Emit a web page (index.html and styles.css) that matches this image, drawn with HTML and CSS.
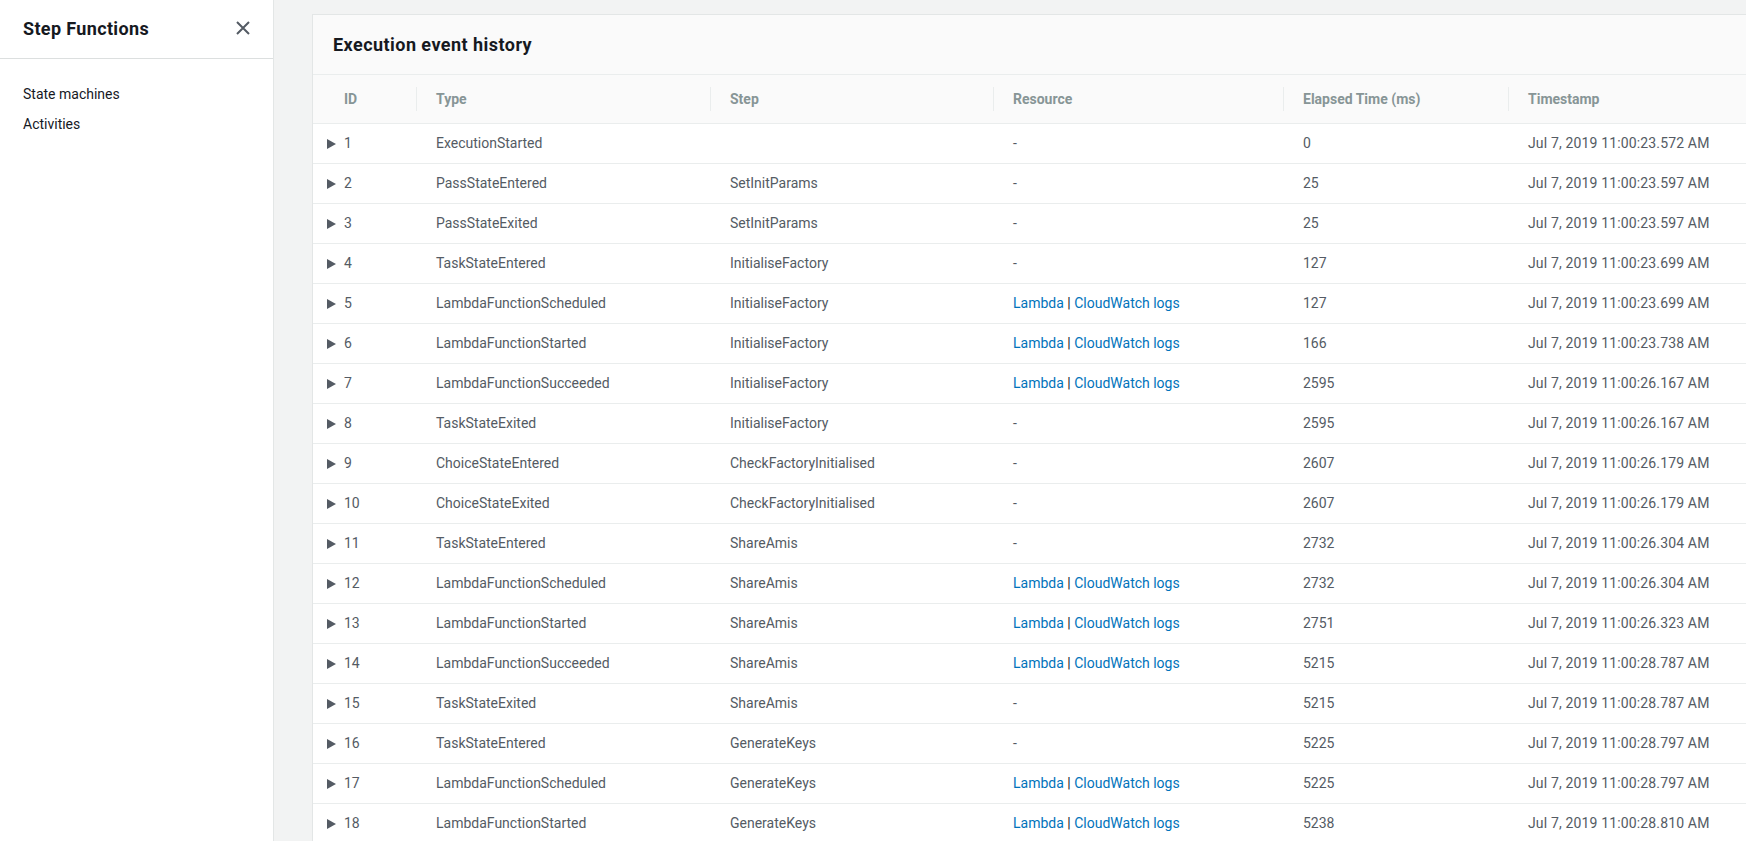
FILE: index.html
```html
<!DOCTYPE html>
<html lang="en">
<head>
<meta charset="utf-8">
<title>Step Functions - Execution event history</title>
<link rel="stylesheet" href="styles.css">
</head>
<body>
<aside class="sidebar">
  <div class="sidebar-header">
    <span class="sidebar-title">Step Functions</span>
    <svg class="close-icon" width="14" height="14" viewBox="0 0 14 14" aria-hidden="true"><path d="M1 1 L13 13 M13 1 L1 13" stroke="#545b64" stroke-width="2" fill="none"/></svg>
  </div>
  <nav class="sidebar-nav">
    <a class="nav-link">State machines</a>
    <a class="nav-link">Activities</a>
  </nav>
</aside>
<main class="main">
  <section class="card">
    <header class="card-header"><h2 class="card-title">Execution event history</h2></header>
    <table class="events">
      <colgroup>
        <col class="c-id"><col class="c-type"><col class="c-step"><col class="c-res"><col class="c-time"><col class="c-ts">
      </colgroup>
      <thead>
        <tr>
          <th class="th-id"><div class="hcell first">ID</div></th>
          <th><div class="hcell">Type</div></th>
          <th><div class="hcell">Step</div></th>
          <th><div class="hcell">Resource</div></th>
          <th><div class="hcell">Elapsed Time (ms)</div></th>
          <th><div class="hcell">Timestamp</div></th>
        </tr>
      </thead>
      <tbody>
        <tr><td class="td-id"><span class="caret"></span>1</td><td>ExecutionStarted</td><td></td><td>-</td><td>0</td><td class="ts">Jul 7, 2019 11:00:23.572 AM</td></tr>
        <tr><td class="td-id"><span class="caret"></span>2</td><td>PassStateEntered</td><td>SetInitParams</td><td>-</td><td>25</td><td class="ts">Jul 7, 2019 11:00:23.597 AM</td></tr>
        <tr><td class="td-id"><span class="caret"></span>3</td><td>PassStateExited</td><td>SetInitParams</td><td>-</td><td>25</td><td class="ts">Jul 7, 2019 11:00:23.597 AM</td></tr>
        <tr><td class="td-id"><span class="caret"></span>4</td><td>TaskStateEntered</td><td>InitialiseFactory</td><td>-</td><td>127</td><td class="ts">Jul 7, 2019 11:00:23.699 AM</td></tr>
        <tr><td class="td-id"><span class="caret"></span>5</td><td>LambdaFunctionScheduled</td><td>InitialiseFactory</td><td><a class="link">Lambda</a> <span class="pipe">|</span> <a class="link">CloudWatch logs</a></td><td>127</td><td class="ts">Jul 7, 2019 11:00:23.699 AM</td></tr>
        <tr><td class="td-id"><span class="caret"></span>6</td><td>LambdaFunctionStarted</td><td>InitialiseFactory</td><td><a class="link">Lambda</a> <span class="pipe">|</span> <a class="link">CloudWatch logs</a></td><td>166</td><td class="ts">Jul 7, 2019 11:00:23.738 AM</td></tr>
        <tr><td class="td-id"><span class="caret"></span>7</td><td>LambdaFunctionSucceeded</td><td>InitialiseFactory</td><td><a class="link">Lambda</a> <span class="pipe">|</span> <a class="link">CloudWatch logs</a></td><td>2595</td><td class="ts">Jul 7, 2019 11:00:26.167 AM</td></tr>
        <tr><td class="td-id"><span class="caret"></span>8</td><td>TaskStateExited</td><td>InitialiseFactory</td><td>-</td><td>2595</td><td class="ts">Jul 7, 2019 11:00:26.167 AM</td></tr>
        <tr><td class="td-id"><span class="caret"></span>9</td><td>ChoiceStateEntered</td><td>CheckFactoryInitialised</td><td>-</td><td>2607</td><td class="ts">Jul 7, 2019 11:00:26.179 AM</td></tr>
        <tr><td class="td-id"><span class="caret"></span>10</td><td>ChoiceStateExited</td><td>CheckFactoryInitialised</td><td>-</td><td>2607</td><td class="ts">Jul 7, 2019 11:00:26.179 AM</td></tr>
        <tr><td class="td-id"><span class="caret"></span>11</td><td>TaskStateEntered</td><td>ShareAmis</td><td>-</td><td>2732</td><td class="ts">Jul 7, 2019 11:00:26.304 AM</td></tr>
        <tr><td class="td-id"><span class="caret"></span>12</td><td>LambdaFunctionScheduled</td><td>ShareAmis</td><td><a class="link">Lambda</a> <span class="pipe">|</span> <a class="link">CloudWatch logs</a></td><td>2732</td><td class="ts">Jul 7, 2019 11:00:26.304 AM</td></tr>
        <tr><td class="td-id"><span class="caret"></span>13</td><td>LambdaFunctionStarted</td><td>ShareAmis</td><td><a class="link">Lambda</a> <span class="pipe">|</span> <a class="link">CloudWatch logs</a></td><td>2751</td><td class="ts">Jul 7, 2019 11:00:26.323 AM</td></tr>
        <tr><td class="td-id"><span class="caret"></span>14</td><td>LambdaFunctionSucceeded</td><td>ShareAmis</td><td><a class="link">Lambda</a> <span class="pipe">|</span> <a class="link">CloudWatch logs</a></td><td>5215</td><td class="ts">Jul 7, 2019 11:00:28.787 AM</td></tr>
        <tr><td class="td-id"><span class="caret"></span>15</td><td>TaskStateExited</td><td>ShareAmis</td><td>-</td><td>5215</td><td class="ts">Jul 7, 2019 11:00:28.787 AM</td></tr>
        <tr><td class="td-id"><span class="caret"></span>16</td><td>TaskStateEntered</td><td>GenerateKeys</td><td>-</td><td>5225</td><td class="ts">Jul 7, 2019 11:00:28.797 AM</td></tr>
        <tr><td class="td-id"><span class="caret"></span>17</td><td>LambdaFunctionScheduled</td><td>GenerateKeys</td><td><a class="link">Lambda</a> <span class="pipe">|</span> <a class="link">CloudWatch logs</a></td><td>5225</td><td class="ts">Jul 7, 2019 11:00:28.797 AM</td></tr>
        <tr><td class="td-id"><span class="caret"></span>18</td><td>LambdaFunctionStarted</td><td>GenerateKeys</td><td><a class="link">Lambda</a> <span class="pipe">|</span> <a class="link">CloudWatch logs</a></td><td>5238</td><td class="ts">Jul 7, 2019 11:00:28.810 AM</td></tr>
      </tbody>
    </table>
  </section>
</main>
</body>
</html>
```

FILE: styles.css
```css
* { box-sizing: border-box; }

html, body {
  margin: 0;
  height: 100%;
}

body {
  display: flex;
  overflow: hidden;
  background: #f2f3f3;
  font-family: Roboto, "Liberation Sans", sans-serif;
  font-size: 14px;
  color: #16191f;
}

.sidebar {
  width: 274px;
  flex-shrink: 0;
  background: #ffffff;
  border-right: 1px solid #e3e6e6;
  height: 100%;
}

.sidebar-header {
  height: 59px;
  border-bottom: 1px solid #dcdfdf;
  display: flex;
  align-items: center;
  justify-content: space-between;
  padding: 0 23px 2px 23px;
}

.sidebar-title {
  font-size: 18px;
  font-weight: 700;
  color: #16191f;
  letter-spacing: 0.35px;
}

.close-icon { display: block; }

.sidebar-nav {
  display: flex;
  flex-direction: column;
  padding: 20px 0 0 23px;
}

.nav-link {
  line-height: 30px;
  color: #16191f;
  text-decoration: none;
}

.main {
  flex: 1;
  min-width: 0;
  overflow: hidden;
  padding: 14px 0 0 38px;
}

.card {
  width: 1480px;
  background: #ffffff;
  border: 1px solid #e3e6e6;
  border-right: none;
}

.card-header {
  height: 60px;
  background: #fafafa;
  border-bottom: 1px solid #eaeded;
  display: flex;
  align-items: center;
  padding: 0 20px;
}

.card-title {
  margin: 0;
  font-size: 18px;
  font-weight: 700;
  color: #16191f;
  letter-spacing: 0.45px;
}

.events {
  width: 100%;
  table-layout: fixed;
  border-collapse: separate;
  border-spacing: 0;
}

.c-id { width: 103px; }
.c-type { width: 294px; }
.c-step { width: 283px; }
.c-res { width: 290px; }
.c-time { width: 225px; }

.events th {
  background: #fafafa;
  border-bottom: 1px solid #eaeded;
  padding: 12px 0;
  text-align: left;
  font-weight: 700;
  color: #879596;
}

.hcell {
  line-height: 24px;
  border-left: 1px solid #eaeded;
  padding-left: 19px;
}

.hcell.first {
  border-left: none;
  padding-left: 31px;
}

.events td {
  line-height: 39px;
  padding: 0 0 0 20px;
  border-bottom: 1px solid #eaeded;
  color: #545b64;
  white-space: nowrap;
  overflow: hidden;
}

.events td.td-id {
  padding-left: 14px;
}

.events td.ts {
  letter-spacing: 0.15px;
}

.caret {
  display: inline-block;
  width: 0;
  height: 0;
  border-left: 9px solid #545b64;
  border-top: 5.5px solid transparent;
  border-bottom: 5.5px solid transparent;
  margin-right: 8px;
  vertical-align: -1px;
}

.link {
  color: #0073bb;
  text-decoration: none;
}

.pipe { color: #16191f; }
```
